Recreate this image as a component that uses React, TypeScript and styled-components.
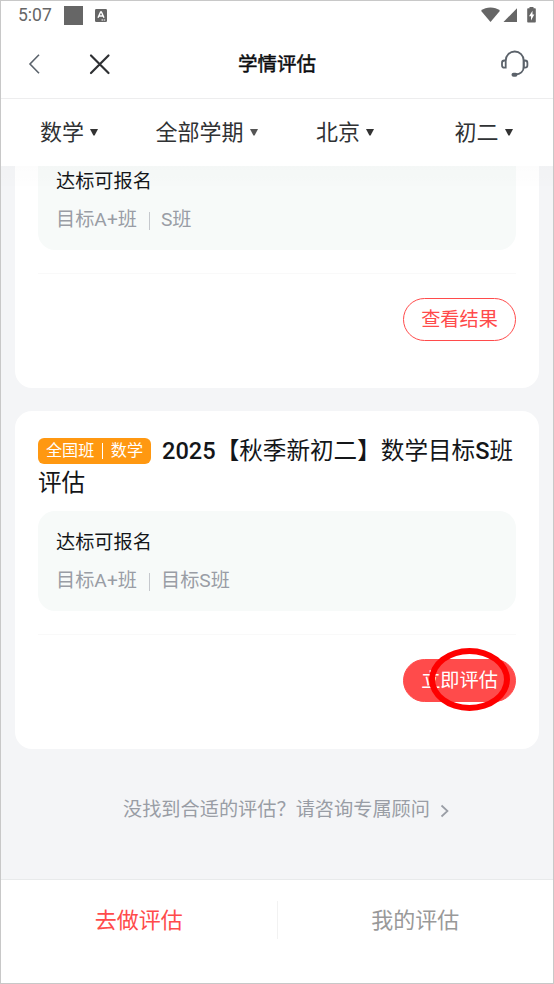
import React from "react";
import styled, { createGlobalStyle, css } from "styled-components";

const GlobalStyle = createGlobalStyle`
  * { box-sizing: border-box; }
  body { margin: 0; background: #fff; }
  button { margin: 0; padding: 0; border: 0; background: none; font: inherit; color: inherit; }
`;

const Screen = styled.div`
  display: flex;
  flex-direction: column;
  width: 554px;
  height: 984px;
  border: 1px solid #c8c8c8;
  background: #f4f5f7;
  font-family: Roboto, "Noto Sans CJK SC", sans-serif;
  font-size: 19.2px;
  color: #141619;
  overflow: hidden;
`;

const StatusBar = styled.div`
  display: flex;
  align-items: center;
  height: 29px;
  padding: 0 16px 0 17px;
  background: #fff;
  color: #666;
  font-size: 17.5px;
`;

const Clock = styled.span`
  width: 46px;
  line-height: 29px;
`;

const Square = styled.span`
  width: 19px;
  height: 19px;
  margin-right: 12px;
  background: #666;
`;

const StatusIcons = styled.div`
  display: flex;
  margin-left: auto;
`;

const NavBar = styled.header`
  display: grid;
  grid-template-columns: 138px 1fr 138px;
  align-items: center;
  height: 69px;
  border-bottom: 1px solid #ededee;
  background: #fff;
`;

const NavActions = styled.div`
  display: flex;
  align-items: center;
  gap: 47px;
  padding-left: 26px;
`;

const NavEnd = styled.div`
  display: flex;
  justify-content: flex-end;
  padding-right: 24px;
`;

const IconButton = styled.button`
  display: flex;
`;

const PageTitle = styled.h1`
  margin: 2px 0 0;
  text-align: center;
  font-size: 19.5px;
  line-height: 28px;
  font-weight: 400;
  color: #0c0d0f;
  -webkit-text-stroke: 0.5px #0c0d0f;
`;

const Filters = styled.div`
  display: grid;
  grid-template-columns: 136px 139px 138px 139px;
  height: 67px;
  background: #fff;
  color: #303234;
`;

const Filter = styled.button`
  display: flex;
  align-items: center;
  justify-content: center;
  gap: 6px;
  font-size: 22px;
`;

const FilterLabel = styled.span`
  line-height: 32px;
`;

const Content = styled.main`
  position: relative;
  flex: 1;
  min-height: 0;
  padding: 0 14px;
  overflow: hidden;

  &::before {
    content: "";
    position: absolute;
    top: 0;
    left: 0;
    right: 0;
    height: 20px;
    background: linear-gradient(rgba(0, 0, 0, 0.012), rgba(0, 0, 0, 0.003));
  }
`;

const Card = styled.section<{ $scrolled?: boolean }>`
  height: 338px;
  margin-bottom: 23px;
  padding: 23px 23px 0;
  border-radius: 17px;
  background: #fff;
  ${(p) => p.$scrolled && css`margin-top: -116px;`}
`;

const CardTitle = styled.h2`
  height: 64px;
  margin: 0 -2px 13px 0;
  font-size: 23.6px;
  line-height: 32px;
  font-weight: 500;
  white-space: nowrap;
`;

const TitleLine = styled.span`
  display: flex;
  height: 32px;
  padding-top: 1px;
`;

const Light = styled.span`
  font-weight: 400;
`;

const Tag = styled.span`
  display: flex;
  align-items: center;
  height: 26px;
  width: 113px;
  margin: 3px 11px 0 0;
  padding: 0 8px 1px;
  border-radius: 6px;
  background: #ff9811;
  color: #fff;
  font-size: 16.1px;
  line-height: 24px;
  font-weight: 400;
`;

const TagRule = styled.span`
  width: 1px;
  height: 16px;
  margin: 0 8px;
  background: #fff;
`;

const Panel = styled.div`
  height: 100px;
  padding: 18px 18px 0;
  border-radius: 17px;
  background: #f7faf9;
`;

const PanelTitle = styled.div`
  line-height: 28px;
`;

const Levels = styled.div`
  display: flex;
  align-items: center;
  margin-top: 10px;
  color: #999da5;
  line-height: 28px;
`;

const LevelRule = styled.span`
  width: 1px;
  height: 18px;
  margin: 2px 11px 0 12px;
  background: #c5c8cd;
`;

const CardFooter = styled.div`
  display: flex;
  justify-content: flex-end;
  margin-top: 23px;
  padding-top: 24px;
  border-top: 1px solid #f9f9f9;
`;

const PillButton = styled.button<{ $filled?: boolean }>`
  width: 113px;
  height: 43px;
  padding-top: 1px;
  border-radius: 22px;
  border: 1.4px solid #ff4b4b;
  line-height: 28px;
  color: ${(p) => (p.$filled ? "#fff" : "#ff4b4b")};
  background: ${(p) => (p.$filled ? "#ff4b4b" : "#fff")};
`;

const Marked = styled.div`
  position: relative;
  display: flex;
`;

const Ring = styled.span`
  position: absolute;
  left: 26px;
  top: -11px;
  width: 81px;
  height: 63px;
  border: 6px solid #fe0000;
  border-radius: 50%;
`;

const Advisor = styled.button`
  display: flex;
  align-items: center;
  justify-content: center;
  gap: 10px;
  width: 100%;
  margin-top: 47px;
  padding-left: 18px;
  color: #999da5;
  line-height: 28px;

  svg { margin-top: 2px; }
`;

const TabBar = styled.nav`
  display: flex;
  height: 104px;
  padding-top: 21px;
  border-top: 1px solid #e8eaeb;
  background: #fff;
`;

const Tab = styled.button<{ $active?: boolean }>`
  flex: 1;
  height: 38px;
  padding-top: 1px;
  font-size: 22px;
  line-height: 37px;
  color: ${(p) => (p.$active ? "#ff4b4b" : "#999")};

  & + & { border-left: 1px solid #f2f2f2; }
`;

const Caret = ({ color }: { color: string }) => (
  <svg width="8" height="7" viewBox="0 0 8 7">
    <path d="M0 0h8L4.6 6.5H3.4z" fill={color} />
  </svg>
);

const filters = [
  { label: "数学", color: "#333" },
  { label: "全部学期", color: "#555" },
  { label: "北京", color: "#333" },
  { label: "初二", color: "#333" },
];

const Requirement = ({ levels }: { levels: [string, string] }) => (
  <Panel>
    <PanelTitle>达标可报名</PanelTitle>
    <Levels>
      {levels[0]}
      <LevelRule />
      {levels[1]}
    </Levels>
  </Panel>
);

const CourseTag = () => (
  <Tag>
    全国班
    <TagRule />
    数学
  </Tag>
);

export default function App() {
  return (
    <>
      <GlobalStyle />
      <Screen>
        <StatusBar>
          <Clock>5:07</Clock>
          <Square />
          <svg width="12" height="13" viewBox="0 0 12 13">
            <rect width="12" height="13" rx="1.2" fill="#666" />
            <path d="M3 8.8 5.6 3h.8L9 8.8M4 7h4" fill="none" stroke="#fff" strokeWidth="1.4" />
            <path d="M6.5 11h4" stroke="#fff" strokeWidth="1" strokeDasharray="1.5 .7" />
          </svg>
          <StatusIcons>
            <svg width="56" height="17" viewBox="0 0 56 17" fill="#666">
              <path d="M0 3.700C5.200-.7 13.800-.7 19 3.700L9.500 15z" />
              <path d="M22.500 15 36 1.200V15z" />
              <path fillRule="evenodd" d="M48.500 0h4v1.300H54q.8 0 .8.8V14.700q0 .8-.8.800h-7q-.8 0-.8-.800V2.100q0-.8.8-.8h1.500zM51.500 3.800 48 9.300h2v4.300l3.300-6h-1.800z" />
            </svg>
          </StatusIcons>
        </StatusBar>
        <NavBar>
          <NavActions>
            <IconButton aria-label="返回">
              <svg width="14" height="20" viewBox="0 0 14 20">
                <path d="M12 .8 3 10l9 9.200" fill="none" stroke="#5b636c" strokeWidth="1.600" />
              </svg>
            </IconButton>
            <IconButton aria-label="关闭">
              <svg width="23" height="22" viewBox="0 0 23 22">
                <path d="m3 2.500 17.500 17.500m0-17.500L3 20" fill="none" stroke="#2e3033" strokeWidth="2.200" strokeLinecap="round" />
              </svg>
            </IconButton>
          </NavActions>
          <PageTitle>学情评估</PageTitle>
          <NavEnd>
            <IconButton aria-label="客服">
              <svg width="28" height="28" viewBox="0 0 28 28" fill="none" stroke="#5b626a" strokeWidth="1.800">
                <path d="M4.700 10.500a9 9 0 0 1 18 0V17c0 4.500-3.500 7.400-8 7.400" />
                <path d="M4.700 10.500v7.200H3.400q-2.400 0-2.400-2.400v-2.400q0-2.400 2.400-2.400zM22.700 10.500v7.200H24q2.400 0 2.400-2.400v-2.400q0-2.400-2.400-2.400z" />
                <rect x="10.500" y="22.700" width="6" height="4" rx="2" fill="#5b626a" stroke="none" />
              </svg>
            </IconButton>
          </NavEnd>
        </NavBar>
        <Filters>
          {filters.map((f) => (
            <Filter key={f.label}>
              <FilterLabel>{f.label}</FilterLabel>
              <Caret color={f.color} />
            </Filter>
          ))}
        </Filters>
        <Content>
          <Card $scrolled>
            <CardTitle />
            <Requirement levels={["目标A+班", "S班"]} />
            <CardFooter>
              <PillButton>查看结果</PillButton>
            </CardFooter>
          </Card>
          <Card>
            <CardTitle>
              <TitleLine>
                <CourseTag />
                2025【<Light>秋季新初二</Light>】<Light>数学目标</Light>S<Light>班</Light>
              </TitleLine>
              <TitleLine>
                <Light>评估</Light>
              </TitleLine>
            </CardTitle>
            <Requirement levels={["目标A+班", "目标S班"]} />
            <CardFooter>
              <Marked>
                <PillButton $filled>立即评估</PillButton>
                <Ring />
              </Marked>
            </CardFooter>
          </Card>
          <Advisor>
            没找到合适的评估？请咨询专属顾问
            <svg width="9" height="14" viewBox="0 0 9 14">
              <path d="m1.500 1.500 6 5.500-6 5.500" fill="none" stroke="#999da5" strokeWidth="1.700" />
            </svg>
          </Advisor>
        </Content>
        <TabBar>
          <Tab $active>去做评估</Tab>
          <Tab>我的评估</Tab>
        </TabBar>
      </Screen>
    </>
  );
}
